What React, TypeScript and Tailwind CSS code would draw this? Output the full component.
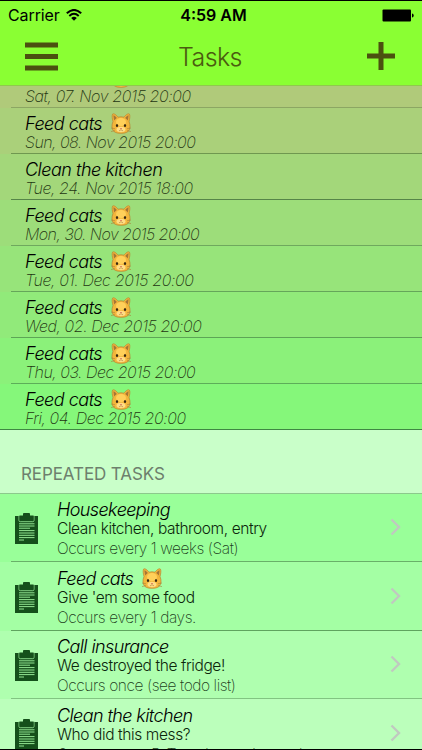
import React from 'react';

const FONT = "font-['Inter','Liberation_Sans',sans-serif]";

const todos = [
  { title: 'Feed cats', cat: true, date: 'Sat, 07. Nov 2015 20:00', bg: 'bg-[#b0ca7a]', line: 'border-[#8ca663]', tracking: 'tracking-[-0.4px]' },
  { title: 'Feed cats', cat: true, date: 'Sun, 08. Nov 2015 20:00', bg: 'bg-[#aad07a]', line: 'border-[#6f9850]', tracking: 'tracking-[-0.54px]' },
  { title: 'Clean the kitchen', cat: false, date: 'Tue, 24. Nov 2015 18:00', bg: 'bg-[#a3d77a]', line: 'border-[#568548]', tracking: 'tracking-[-0.42px]' },
  { title: 'Feed cats', cat: true, date: 'Mon, 30. Nov 2015 20:00', bg: 'bg-[#9ddd7a]', line: 'border-[#6fa85e]', tracking: 'tracking-[-0.57px]' },
  { title: 'Feed cats', cat: true, date: 'Tue, 01. Dec 2015 20:00', bg: 'bg-[#97e47a]', line: 'border-[#65a65a]', tracking: 'tracking-[-0.37px]' },
  { title: 'Feed cats', cat: true, date: 'Wed, 02. Dec 2015 20:00', bg: 'bg-[#91ea7a]', line: 'border-[#5da556]', tracking: 'tracking-[-0.43px]' },
  { title: 'Feed cats', cat: true, date: 'Thu, 03. Dec 2015 20:00', bg: 'bg-[#8bf17a]', line: 'border-[#5cae59]', tracking: 'tracking-[-0.51px]' },
  { title: 'Feed cats', cat: true, date: 'Fri, 04. Dec 2015 20:00', bg: 'bg-[#85f77a]', line: 'border-transparent', tracking: 'tracking-[-0.45px]' },
];

const repeated = [
  { title: 'Housekeeping', cat: false, text: 'Clean kitchen, bathroom, entry', occurs: 'Occurs every 1 weeks (Sat)', bg: 'bg-[#99ff99]', line: 'border-[#69b069]' },
  { title: 'Feed cats', cat: true, text: "Give 'em some food", occurs: 'Occurs every 1 days.', bg: 'bg-[#a4ffa4]', line: 'border-[#5fa35f]' },
  { title: 'Call insurance', cat: false, text: 'We destroyed the fridge!', occurs: 'Occurs once (see todo list)', bg: 'bg-[#afffaf]', line: 'border-[#82c482]' },
  { title: 'Clean the kitchen', cat: false, text: 'Who did this mess?', occurs: 'Occurs every 5. Tuesday each month', bg: 'bg-[#bbffbb]', line: 'border-transparent' },
];

function Cat() {
  return (
    <svg className="ml-[9px] h-[21px] w-5 shrink-0" viewBox="0 0 20 21">
      <path d="M1.500 1.200C2.600-.2 5.600 2.200 7 4.200Q10 3.400 13 4.200C14.400 2.200 17.400-.2 18.500 1.200C19.300 3 18.600 6.500 18 8.500C19.500 12 19.400 16 17.300 18.200C15.500 20 12.500 20.300 10 20.300S4.500 20 2.700 18.200C.6 16 .5 12 2 8.500C1.400 6.500.7 3 1.500 1.200Z" fill="#f3b63c" stroke="#b78331" strokeWidth=".7" />
      <path d="M2.400 2.200C3.300 2.300 5 3.800 5.800 5L3 7.500ZM17.600 2.200C16.700 2.300 15 3.800 14.200 5L17 7.500Z" fill="#a77535" />
      <ellipse cx="10" cy="9" rx="5" ry="4" fill="#ffd05a" />
      <ellipse cx="10" cy="16.500" rx="4.500" ry="2.800" fill="#ffdc85" />
      <ellipse cx="6" cy="12.500" rx="1.100" ry="1.500" fill="#362712" />
      <ellipse cx="14" cy="12.500" rx="1.100" ry="1.500" fill="#362712" />
      <path d="M8.900 15h2.200L10 16.400Z" fill="#d66a54" />
      <path d="M8 17.700Q9.400 18 10 16.500Q10.600 18 12 17.700M0 15l4 .7M0 18.600l4-1M20 15l-4 .7M20 18.600l-4-1" fill="none" stroke="#a8813d" strokeWidth=".6" />
    </svg>
  );
}

function Clipboard() {
  return (
    <svg className="mt-[3px] h-[31px] w-[23px] shrink-0" viewBox="0 0 23 31">
      <path d="M0 3h23v28H0Z" fill="#15501b" />
      <path d="M4 2.300V7.500Q4 8.700 5.200 8.700H17.800Q19 8.700 19 7.500V2.300" fill="none" stroke="#8fdf8f" strokeWidth=".9" />
      <path d="M4.500 2.500H8V.8Q8 0 9 0h5q1 0 1 .8V2.500h3.500V6.700Q18.500 8 17.200 8H5.800Q4.500 8 4.500 6.700Z" fill="#15501b" />
      <path d="M4 10.800h15.500M4 13h15.500M4 15.200h11M4 17.600h15.500M4 20h15.500M4 22.300h15.500M4 24.600h15.500M4 27h5" stroke="#93e593" strokeWidth="1" />
    </svg>
  );
}

function StatusBar() {
  return (
    <div className="grid h-7 grid-cols-3 items-center text-[16px] text-black">
      <div className="flex items-center pl-2 font-normal">
        <span className="tracking-[-0.1px]">Carrier</span>
        <svg className="ml-[6px] h-3 w-4" viewBox="0 0 16 12">
          <path d="M.8 4.300Q8-2.400 15.200 4.300M3.300 6.900Q8 2.700 12.700 6.900" fill="none" stroke="#000" strokeWidth="2" />
          <path d="M5.200 8.900Q8 6.500 10.800 8.900L8 11.800Z" />
        </svg>
      </div>
      <span className="pl-[5px] text-center text-[16px] font-semibold">4:59 AM</span>
      <svg className="mr-2 h-[13px] w-8 justify-self-end" viewBox="0 0 32 13">
        <rect x=".5" y=".5" width="28.500" height="12" rx="1" />
        <path d="M30 4.500q1.700 0 1.700 2t-1.700 2Z" />
      </svg>
    </div>
  );
}

export default function App() {
  return (
    <div className={`${FONT} flex h-[750px] w-[422px] flex-col overflow-hidden border-y border-black bg-[#c9ffc9] font-light`}>
      <header className="z-10 h-[85px] shrink-0 border-b border-[#8fc94d] bg-[#8aff33]">
        <StatusBar />
        <div className="flex h-[54px] items-center justify-between pr-[27px] pl-[25px]">
          <svg className="h-[29px] w-[33px]" viewBox="0 0 33 29">
            <path d="M0 3h33M0 14.500h33M0 26h33" stroke="#4b5010" strokeWidth="5" />
          </svg>
          <h1 className="pt-[3px] pr-[5px] text-[25px] tracking-[-0.6px] text-[#4b5c10]">Tasks</h1>
          <svg className="h-7 w-7" viewBox="0 0 28 28">
            <path d="M0 14h28M14 0v28" stroke="#4b5010" strokeWidth="5" />
          </svg>
        </div>
      </header>

      <ul className="-mt-6 shrink-0 border-b border-[#3f8743]">
        {todos.map((todo) => (
          <li key={todo.date} className={`flex h-[46px] pl-[11px] last:h-[45px] ${todo.bg}`}>
            <div className={`flex-1 border-b pl-[14px] italic ${todo.line}`}>
              <div className="flex h-[25px] items-center pt-[5px] text-[18px] tracking-[-0.5px] text-black">
                {todo.title}
                {todo.cat && <Cat />}
              </div>
              <div className={`text-[16px] leading-[19px] font-extralight text-[#1f3512] ${todo.tracking}`}>{todo.date}</div>
            </div>
          </li>
        ))}
      </ul>

      <h2 className="flex h-[63.5px] shrink-0 items-end border-b border-[#8cc98c] pb-[7.5px] pl-[21px] text-[17px] leading-[22px] font-normal tracking-[-0.1px] text-[#6d806d]">
        REPEATED TASKS
      </h2>

      <ul className="shrink-0">
        {repeated.map((task) => (
          <li key={task.title} className={`flex h-[68.5px] pl-[11px] ${task.bg}`}>
            <div className={`flex flex-1 items-center border-b pr-[21px] pl-1 ${task.line}`}>
              <Clipboard />
              <div className="ml-[19px] flex-1 self-start whitespace-nowrap">
                <div className="flex h-[26.5px] items-center pt-[6px] text-[18px] tracking-[-0.6px] text-black italic">
                  {task.title}
                  {task.cat && <Cat />}
                </div>
                <p className="text-[15.500px] leading-[18px] tracking-[-0.4px] text-[#0c260c]">{task.text}</p>
                <p className="text-[15.500px] leading-[21px] font-extralight tracking-[-0.43px] text-[#1c401c]">{task.occurs}</p>
              </div>
              <svg className="h-[18px] w-[11px]" viewBox="0 0 11 18">
                <path d="M1.500 1.500L9 9L1.500 16.500" fill="none" stroke="#c0c9c0" strokeWidth="2.400" />
              </svg>
            </div>
          </li>
        ))}
      </ul>
    </div>
  );
}
